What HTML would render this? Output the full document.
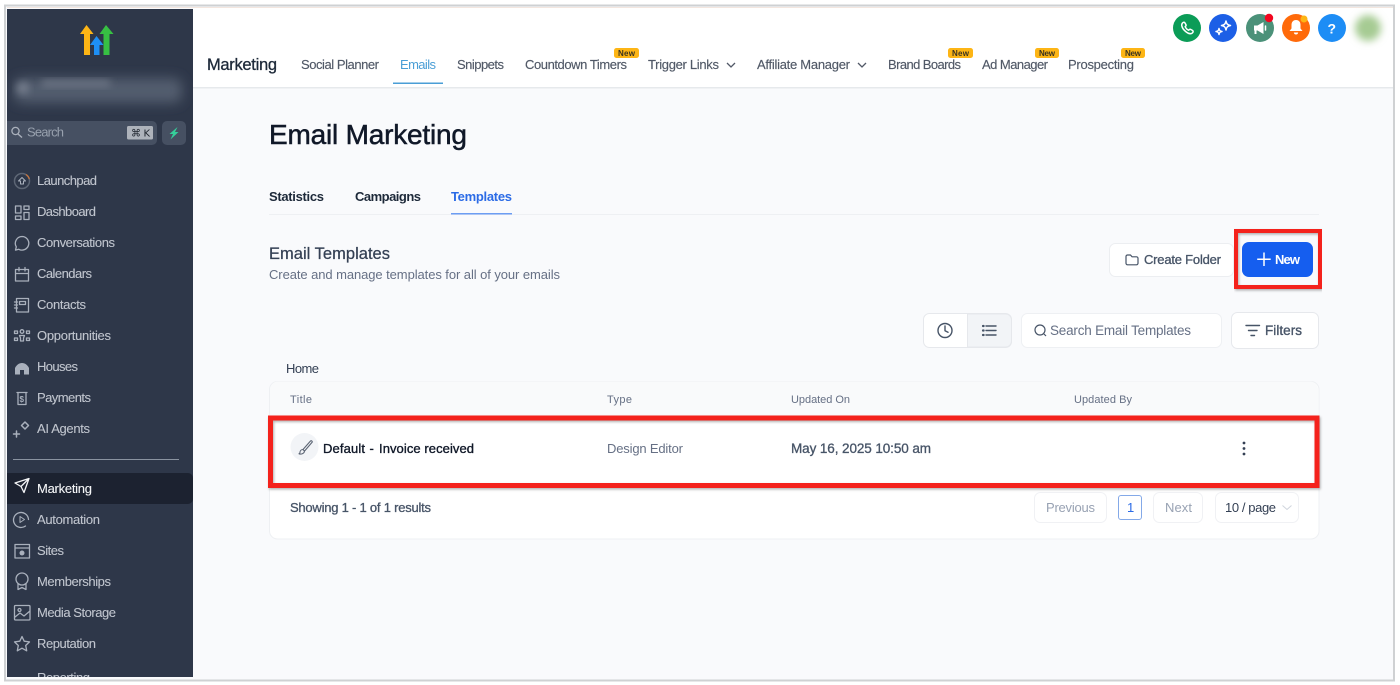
<!DOCTYPE html>
<html lang="en"><head><meta charset="utf-8"><title>Email Marketing</title>
<style>
html,body{margin:0;padding:0;background:#fff;width:1400px;height:685px;overflow:hidden}
svg{display:block}
text{font-family:"Liberation Sans","DejaVu Sans",sans-serif;font-size:13px;white-space:pre}
.nav{fill:#c0c5ce;font-size:13px;stroke:#c0c5ce;stroke-width:.1}
.top{fill:#515967;font-size:13px;stroke:#515967;stroke-width:.15}
.new{fill:#3a3320;font-size:8px;font-weight:bold}
.med{stroke-width:.3}
.ic{fill:none;stroke:#a9b0bc;stroke-width:1.3;stroke-linecap:round;stroke-linejoin:round}
.dk{fill:none;stroke:#475467;stroke-width:1.4;stroke-linecap:round;stroke-linejoin:round}
.w{fill:none;stroke:#fff;stroke-width:1.5;stroke-linecap:round;stroke-linejoin:round}
</style></head><body>
<svg width="1400" height="685" viewBox="0 0 1400 685" xmlns="http://www.w3.org/2000/svg">
<defs>
<filter id="b6" x="-30%" y="-60%" width="160%" height="220%"><feGaussianBlur stdDeviation="6"/></filter>
<filter id="b3" x="-40%" y="-40%" width="180%" height="180%"><feGaussianBlur stdDeviation="4"/></filter>
<filter id="sh" x="-2%" y="-10%" width="104%" height="125%"><feDropShadow dx="1" dy="1.5" stdDeviation="1.2" flood-color="#000" flood-opacity=".3"/></filter>
<clipPath id="sc"><rect x="7" y="9" width="186" height="668"/></clipPath>
</defs>

<!-- frame -->
<rect width="1400" height="685" fill="#fff"/>
<rect x="5" y="5.500" width="1389" height="675" fill="#f9fafc" stroke="#cfd1d3" stroke-width="2"/>
<rect x="7" y="7" width="1386" height="1" fill="#f3e6df"/>

<!-- header -->
<rect x="193" y="8" width="1200" height="79" fill="#fff"/>
<rect x="193" y="87" width="1200" height="1.500" fill="#e6e9ec"/>
<text x="207" y="70" textLength="70" style="font-size:16.500px;fill:#1d2939;stroke:#1d2939" class="med">Marketing</text>
<text class="top" x="301" y="69" textLength="78">Social Planner</text>
<text x="400" y="69" textLength="36" style="fill:#4a9ed6">Emails</text>
<rect x="393" y="82.500" width="50" height="1.500" fill="#4a9ed6"/>
<text class="top" x="457" y="69" textLength="47">Snippets</text>
<text class="top" x="525" y="69" textLength="102">Countdown Timers</text>
<text class="top" x="648" y="69" textLength="71">Trigger Links</text>
<path d="M727 63l4 4 4-4" fill="none" stroke="#515967" stroke-width="1.300"/>
<text class="top" x="757" y="69" textLength="93">Affiliate Manager</text>
<path d="M858 63l4 4 4-4" fill="none" stroke="#515967" stroke-width="1.300"/>
<text class="top" x="888" y="69" textLength="73">Brand Boards</text>
<text class="top" x="982" y="69" textLength="66">Ad Manager</text>
<text class="top" x="1068" y="69" textLength="66">Prospecting</text>
<g fill="#fdb515">
<rect x="614" y="48" width="25" height="10" rx="2.500"/><rect x="948" y="48" width="25" height="10" rx="2.500"/>
<rect x="1035" y="48" width="24" height="10" rx="2.500"/><rect x="1121" y="48" width="24" height="10" rx="2.500"/>
</g>
<text class="new" x="618" y="56" textLength="17">New</text>
<text class="new" x="952" y="56" textLength="17">New</text>
<text class="new" x="1039" y="56" textLength="16">New</text>
<text class="new" x="1125" y="56" textLength="16">New</text>

<!-- header action icons -->
<circle cx="1187" cy="28" r="14" fill="#0b9c57"/>
<path class="w" d="M1182.500 23c1-1 2-1 2.500 0l1 1.800c.3.700 0 1.200-.8 1.800.6 1.500 2 3 3.500 3.600.7-.8 1.200-1.100 1.900-.8l1.800 1c1 .6 1 1.500 0 2.500-1.500 1.300-3.500 1-6-.8-2.500-1.800-4.200-4.300-4.600-6.300-.2-1.200 0-2 .7-2.800z"/>
<circle cx="1223" cy="28" r="14" fill="#1c5fe6"/>
<path class="w" d="M1226 21c.6 3 1.500 4 4.500 4.500-3 .6-3.900 1.500-4.500 4.500-.6-3-1.500-3.900-4.500-4.500 3-.5 3.900-1.500 4.500-4.500zM1219 28.500c.4 2 1 2.600 3 3-2 .4-2.600 1-3 3-.4-2-1-2.600-3-3 2-.4 2.600-1 3-3z" stroke-width="1.300"/>
<circle cx="1260" cy="28" r="14" fill="#4b9179"/>
<path d="M1254 25.500h3.500l6-3.500v12l-6-3.500h-1v3.500h-2v-3.500h-.5z" fill="#fff"/><path class="w" d="M1265.500 26v4"/>
<circle cx="1269" cy="18" r="4.200" fill="#f2061f"/>
<circle cx="1296" cy="28" r="14" fill="#ff6a0a"/>
<path d="M1296 20c3 0 4.500 2.200 4.500 5v3.500l2 2.500h-13l2-2.500v-3.500c0-2.800 1.500-5 4.500-5zM1293.800 32.500h4.400c-.3 1.500-1.200 2-2.200 2s-1.900-.5-2.200-2z" fill="#fff"/>
<circle cx="1304" cy="19" r="3.500" fill="#fdb515"/>
<circle cx="1332" cy="28" r="14" fill="#1d8df5"/>
<text x="1327.500" y="33.500" textLength="8.500" style="font-size:14px;font-weight:bold;fill:#fff">?</text>
<circle cx="1368" cy="28" r="13" fill="#a6cb93" filter="url(#b3)"/>

<!-- sidebar -->
<g clip-path="url(#sc)">
<rect x="7" y="9" width="186" height="669" fill="#2e3749"/>
<!-- logo -->
<path d="M86.500 25l7 9h-3.500v21h-6v-21h-4z" fill="#fdb515"/>
<path d="M96.500 36l7 9h-4v10h-5.500v-10h-4z" fill="#1e8ff5"/>
<path d="M106 25l7.500 9h-4v21h-6v-21h-4z" fill="#37c043"/>
<!-- blurred account -->
<rect x="14" y="78" width="168" height="25" rx="8" fill="#535d6e" filter="url(#b6)"/>
<rect x="42" y="80" width="68" height="7" fill="#6c7584" filter="url(#b3)"/>
<circle cx="23" cy="88" r="6" fill="#767e8d" filter="url(#b3)"/>
<!-- search -->
<path d="M7 121h145a5 5 0 0 1 5 5v14a5 5 0 0 1-5 5h-145z" fill="#465062"/>
<circle cx="15.500" cy="131" r="3.600" fill="none" stroke="#aab1bc" stroke-width="1.300"/><path d="M18 134l4 3.500" stroke="#aab1bc" stroke-width="1.400"/>
<text x="27" y="136.500" textLength="37" style="fill:#98a1ae">Search</text>
<rect x="127" y="126" width="26" height="13.500" rx="1.500" fill="#aeb3bb"/>
<text x="131" y="136.500" textLength="19" style="font-family:'DejaVu Sans','Liberation Sans',sans-serif;font-size:10px;fill:#20262f">⌘ K</text>
<rect x="162" y="121" width="24" height="24" rx="5" fill="#465062"/>
<path d="M177.500 127l-8 7h3.500l-2.500 5.500 8-7.500h-3.500z" fill="#35cf9a"/>

<!-- nav -->
<text class="nav" x="37" y="185" textLength="60">Launchpad</text>
<text class="nav" x="37" y="216" textLength="59">Dashboard</text>
<text class="nav" x="37" y="247" textLength="78">Conversations</text>
<text class="nav" x="37" y="278" textLength="55">Calendars</text>
<text class="nav" x="37" y="309" textLength="49">Contacts</text>
<text class="nav" x="37" y="340" textLength="74">Opportunities</text>
<text class="nav" x="37" y="371" textLength="41">Houses</text>
<text class="nav" x="37" y="402" textLength="54">Payments</text>
<text class="nav" x="37" y="433" textLength="53">AI Agents</text>
<rect x="13" y="459" width="166" height="1" fill="#8a93a0"/>
<path d="M7 473h181a5 5 0 0 1 5 5v21a5 5 0 0 1-5 5h-181z" fill="#1c2230"/>
<text class="nav" x="37" y="493" textLength="55" style="fill:#f4f5f7;stroke:#f4f5f7">Marketing</text>
<text class="nav" x="37" y="524" textLength="63">Automation</text>
<text class="nav" x="37" y="555" textLength="27">Sites</text>
<text class="nav" x="37" y="586" textLength="74">Memberships</text>
<text class="nav" x="37" y="617" textLength="79">Media Storage</text>
<text class="nav" x="37" y="648" textLength="59">Reputation</text>
<text class="nav" x="37" y="682" textLength="53">Reporting</text>

<!-- nav icons -->
<circle cx="22" cy="181" r="7.500" fill="none" stroke="#5d6675" stroke-width="1.500"/>
<path d="M26 174.500a7.500 7.500 0 0 1 3.300 4.500" fill="none" stroke="#c9743b" stroke-width="1.300"/>
<path class="ic" d="M18.500 181l3.500-3.500 3.500 3.500h-2v3h-3v-3z" style="stroke-width:1"/>
<path class="ic" d="M15.500 206h5.500v7h-5.500zM15.500 216h5.500v3.500h-5.500zM24 206h5v3.500h-5zM24 212.500h5v7h-5z"/>
<path class="ic" d="M22 236.500a6.800 6.800 0 1 1-3.200 12.800l-3.300.8.800-3.300a6.800 6.800 0 0 1 5.700-10.300z"/>
<path class="ic" d="M15.500 269.500h13v11.500h-13zM15.500 273.500h13M19 267.500v3.500M25 267.500v3.500"/>
<path class="ic" d="M16.500 298.500h12v13.500h-12zM19.500 301.500h6v3h-6zM14.500 302h3M14.500 305h3M14.500 308h3"/>
<path class="ic" d="M14.500 331h3v2.500h-3zM26.500 331h3v2.500h-3zM14.500 338h3v2.500h-3zM26.500 338h3v2.500h-3z" style="stroke-width:1.300"/>
<circle class="ic" cx="22" cy="331.500" r="1.800"/><path class="ic" d="M19.500 335.500h5l-1 2.500v3h-3v-3z"/>
<path d="M15 368c1.500-3 4-5 7-5s5.500 2 7 5v6.500h-14z" fill="#a9b0bc"/><rect x="20" y="370" width="4" height="4.500" fill="#2e3749"/>
<path class="ic" d="M17 392.500h10M18 392.500v12h8v-12"/>
<text x="19.500" y="402" textLength="5" style="font-size:8px;fill:#a9b0bc;font-weight:bold">$</text>
<path class="ic" d="M25 422l3.500 3.500-3.500 3.500-3.500-3.500zM16.500 431v6M13.500 434h6" style="stroke-width:1.500"/>
<path d="M15 483l14-4.500-5 14-3-6z M21 486.500l8-8" fill="none" stroke="#f4f5f7" stroke-width="1.300" stroke-linejoin="round"/>
<path class="ic" d="M28.500 519.500a7.500 7.500 0 1 0-3 6.500"/><path class="ic" d="M20 516.500l4.500 3-4.500 3z" style="stroke-width:1"/>
<path class="ic" d="M15 544.500h14.500v13.500h-14.500zM15 548h14.500"/><circle cx="22" cy="553" r="2.500" fill="#a9b0bc"/>
<circle class="ic" cx="22" cy="579" r="6"/><path class="ic" d="M18 584v5.500l4-2 4 2v-5.500"/>
<path class="ic" d="M15.500 605.500h13.500a1 1 0 0 1 1 1v12.500a1 1 0 0 1-1 1h-13.500a1 1 0 0 1-1-1v-12.500a1 1 0 0 1 1-1zM15 617l5-4 4 3 6-5"/><circle class="ic" cx="19.500" cy="610" r="1.500"/>
<path class="ic" d="M22 636.500l2.200 4.700 5.300.7-3.800 3.600 1 5.300-4.700-2.600-4.700 2.600 1-5.300-3.800-3.600 5.300-.7z"/>
</g>

<!-- page head -->
<text x="269" y="144" textLength="198" style="font-size:28px;fill:#101828;stroke:#101828;stroke-width:.5">Email Marketing</text>
<rect x="269" y="214" width="1050" height="1" fill="#eef0f3"/>
<text x="269" y="201" textLength="55" style="font-weight:bold;fill:#1d2939">Statistics</text>
<text x="355" y="201" textLength="66" style="font-weight:bold;fill:#1d2939">Campaigns</text>
<text x="451" y="201" textLength="61" style="font-weight:bold;fill:#2b6be6">Templates</text>
<rect x="451" y="213" width="61" height="1.500" fill="#6c9df3"/>
<text x="269" y="259" textLength="121" style="font-size:16.500px;fill:#344054;stroke:#344054;stroke-width:.25">Email Templates</text>
<text x="269" y="279" textLength="291" style="fill:#667085">Create and manage templates for all of your emails</text>

<!-- buttons -->
<rect x="1109.500" y="243.500" width="124" height="33" rx="6" fill="#fff" stroke="#eceef1"/>
<path class="dk" d="M1126 256.500a1.500 1.500 0 0 1 1.500-1.500h3l1.500 1.800h4.500a1.500 1.500 0 0 1 1.500 1.500v5a1.500 1.500 0 0 1-1.500 1.500h-9a1.500 1.500 0 0 1-1.500-1.500z" style="stroke-width:1.200"/>
<text x="1144" y="264" textLength="77" style="fill:#475467;stroke:#475467;stroke-width:.3">Create Folder</text>
<rect x="1242" y="242" width="71" height="35" rx="7" fill="#155eef"/>
<path d="M1264 252.500v13.500M1257.200 259.200h13.500" stroke="#fff" stroke-width="1.500"/>
<text x="1275" y="264" textLength="25" style="font-weight:bold;fill:#fff">New</text>
<rect x="1236" y="231" width="84" height="56" fill="none" stroke="#f4221a" stroke-width="4" filter="url(#sh)"/>

<!-- toolbar -->
<rect x="923.500" y="313.500" width="88" height="34" rx="6" fill="#fff" stroke="#e6e8ec"/>
<path d="M967.500 314h38a6 6 0 0 1 6 6v21a6 6 0 0 1-6 6h-38z" fill="#f2f4f7" stroke="#e6e8ec"/>
<circle cx="945" cy="330.500" r="7" class="dk"/><path class="dk" d="M945 326v4.800l3 1.500"/>
<path class="dk" d="M986 326h10M986 330.500h10M986 335h10"/>
<path d="M983 326h.6M983 330.500h.6M983 335h.6" stroke="#475467" stroke-width="2.200" stroke-linecap="round"/>
<rect x="1021.500" y="313.500" width="200" height="34" rx="6" fill="#fff" stroke="#eef0f3"/>
<circle cx="1040" cy="330" r="5" fill="none" stroke="#475467" stroke-width="1.200"/><path d="M1044 334l2 2" stroke="#475467" stroke-width="1.200"/>
<text x="1050" y="335" textLength="141" style="font-size:13.500px;fill:#667085">Search Email Templates</text>
<rect x="1231.500" y="312.500" width="87" height="36" rx="6" fill="#fff" stroke="#e6e8ec"/>
<path d="M1246 325.500h13.500M1248.500 330.500h8.500M1251 335.500h3.500" stroke="#475467" stroke-width="1.400" stroke-linecap="round"/>
<text x="1265" y="335" textLength="37" style="fill:#475467;stroke:#475467;stroke-width:.35;font-size:13.500px">Filters</text>

<!-- table -->
<text x="286" y="373" textLength="33" style="fill:#344054">Home</text>
<rect x="269.500" y="381.500" width="1049.500" height="157.500" rx="8" fill="#fff" stroke="#eef0f3"/>
<path d="M270 417v-27.500a8 8 0 0 1 8-8h1032a8 8 0 0 1 8 8v27.500z" fill="#f9fafb"/>
<text x="290" y="403" textLength="22" style="font-size:11px;fill:#667085">Title</text>
<text x="607" y="403" textLength="25" style="font-size:11px;fill:#667085">Type</text>
<text x="791" y="403" textLength="59" style="font-size:11px;fill:#667085">Updated On</text>
<text x="1074" y="403" textLength="58" style="font-size:11px;fill:#667085">Updated By</text>
<circle cx="304.500" cy="447" r="14" fill="#f2f4f7"/>
<path class="dk" d="M303 449.500l7.500-8.500c.8-.8 2.300.3 1.500 1.400l-7.500 8.700zM303 449.500c-1.800 0-3 1.300-3 2.800 0 .7-.4 1.200-1 1.500 2 .6 5 .2 5.500-2.600" style="stroke-width:1.100;stroke:#5d6675"/>
<text x="323" y="453" textLength="42" style="fill:#101828;stroke:#101828;stroke-width:.35">Default</text>
<text x="369.500" y="453" textLength="5" style="fill:#101828;stroke:#101828;stroke-width:.35">-</text>
<text x="379" y="453" textLength="95" style="fill:#101828;stroke:#101828;stroke-width:.35">Invoice received</text>
<text x="607" y="453" textLength="76" style="fill:#667085">Design Editor</text>
<text x="791" y="453" textLength="140" style="font-size:13.500px;fill:#475467;stroke:#475467;stroke-width:.3">May 16, 2025 10:50 am</text>
<g fill="#344054"><circle cx="1244" cy="443" r="1.400"/><circle cx="1244" cy="448.500" r="1.400"/><circle cx="1244" cy="454" r="1.400"/></g>
<rect x="270.500" y="418" width="1046.500" height="67.500" fill="none" stroke="#f4221a" stroke-width="5" filter="url(#sh)"/>

<!-- footer -->
<text x="290" y="512" textLength="141" style="fill:#475467;stroke:#475467;stroke-width:.3">Showing 1 - 1 of 1 results</text>
<rect x="1034.500" y="492.500" width="72" height="30" rx="6" fill="#fff" stroke="#f0f1f4"/>
<text x="1046" y="512" textLength="49" style="fill:#98a2b3">Previous</text>
<rect x="1118.500" y="495.500" width="23" height="24" rx="2.500" fill="#fff" stroke="#84a9e8"/>
<text x="1127" y="512" textLength="6.500" style="fill:#2b6be6">1</text>
<rect x="1153.500" y="492.500" width="49" height="30" rx="6" fill="#fff" stroke="#f0f1f4"/>
<text x="1165" y="512" textLength="27" style="fill:#98a2b3">Next</text>
<rect x="1215.500" y="492.500" width="83" height="30" rx="6" fill="#fff" stroke="#f0f1f4"/>
<text x="1225" y="512" textLength="51" style="fill:#344054">10 / page</text>
<path d="M1282.500 505.500l4.500 4 4.500-4" fill="none" stroke="#d0d5dd" stroke-width="1"/>
</svg>
</body></html>
